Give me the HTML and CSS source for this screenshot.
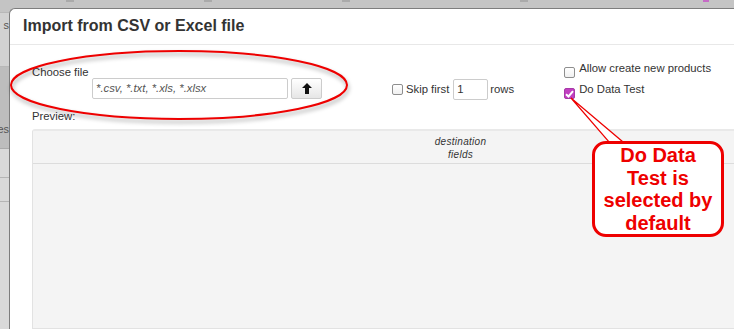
FILE: index.html
```html
<!DOCTYPE html>
<html>
<head>
<meta charset="utf-8">
<link rel="stylesheet" href="styles.css">
</head>
<body>
<div class="page">
  <div class="topstrip">
    <span class="mark m1"></span><span class="mark m2"></span><span class="mark m3"></span><span class="mark m4"></span><span class="mark purple"></span>
  </div>
  <div class="main">
    <div class="side">
      <div class="side-a"><span class="side-txt">s</span></div>
      <div class="side-b"><span class="side-txt">es</span></div>
      <div class="side-c"></div>
    </div>
    <div class="modal">
      <div class="modal-header">
        <h1 class="title">Import from CSV or Excel file</h1>
      </div>
      <div class="modal-body">
        <div class="controls">
          <div class="choose">
            <div class="label">Choose file</div>
            <div class="file-row">
              <div class="file-input">*.csv, *.txt, *.xls, *.xlsx</div>
              <div class="btn">
                <svg width="10" height="11" viewBox="0 0 10 11"><path d="M5 0 L10 5 L7 5 L7 11 L3 11 L3 5 L0 5 Z" fill="#111"/></svg>
              </div>
            </div>
          </div>
          <div class="skip">
            <span class="cb"></span>
            <span class="txt">Skip first</span>
            <div class="num-input">1</div>
            <span class="txt">rows</span>
          </div>
          <div class="opts">
            <div class="opt"><span class="cb"></span><span class="txt">Allow create new products</span></div>
            <div class="opt"><span class="cb checked"><svg width="9" height="8" viewBox="0 0 9 8"><path d="M1 4.2 L3.5 6.5 L8 1.2" fill="none" stroke="#fff" stroke-width="2"/></svg></span><span class="txt">Do Data Test</span></div>
          </div>
        </div>
        <div class="preview-label">Preview:</div>
        <div class="table">
          <div class="thead">
            <div class="th">destination<br>fields</div>
          </div>
          <div class="tbody"></div>
        </div>
      </div>
    </div>
  </div>

  <svg class="ellipse" width="360" height="90" viewBox="0 0 360 90">
    <ellipse cx="179" cy="36" rx="168" ry="34" fill="none" stroke="#ee0000" stroke-width="2"/>
  </svg>

  <svg class="pointer" width="70" height="50" viewBox="0 0 70 50">
    <polygon points="10,2 48,46 62,46" fill="#fff" stroke="#ee0000" stroke-width="1.2"/>
  </svg>
  <div class="callout">Do Data<br>Test is<br>selected by<br>default</div>
</div>
</body>
</html>
```
FILE: styles.css
```css
* { box-sizing: border-box; }
html, body { margin: 0; padding: 0; }
body {
  width: 734px;
  height: 329px;
  overflow: hidden;
  background: #c4c4c4;
  font-family: "Liberation Sans", Arial, sans-serif;
  font-size: 11.3px;
  color: #333;
}
.page { position: relative; width: 734px; height: 329px; overflow: hidden; }

.topstrip {
  height: 8px;
  background: #c4c4c4;
  display: flex;
  position: relative;
}
.mark { display: block; height: 2px; width: 8px; background: #aaa; margin-top: 0; }
.m1 { margin-left: 66px; }
.m2 { margin-left: 130px; }
.m3 { margin-left: 130px; }
.m4 { margin-left: 170px; }
.purple { background: #c66bc6; width: 6px; margin-left: 175px; }

.main { display: flex; height: 321px; }
.side { width: 9px; display: flex; flex-direction: column; }
.side-a {
  height: 55px;
  background: #d2d2d2;
  border-top: 1px solid #b8b8b8;
  border-bottom: 1px solid #b8b8b8;
  margin-top: 4px;
  position: relative;
  overflow: hidden;
}
.side-b {
  height: 82px;
  background: #bdbdbd;
  border-bottom: 1px solid #aaa;
  position: relative;
  overflow: hidden;
}
.side-c {
  flex: 1;
  background: #d9d9d9;
  background-image:
    linear-gradient(#b5b5b5, #b5b5b5),
    linear-gradient(#b5b5b5, #b5b5b5);
  background-size: 100% 1px, 100% 1px;
  background-position: 0 28px, 0 52px;
  background-repeat: no-repeat;
}
.side-txt { position: absolute; right: 0; top: 6px; font-size: 11px; color: #555; }
.side-b .side-txt { top: 56px; }

.modal {
  flex: 1;
  background: #fff;
  border: 1px solid #7d7d7d;
  border-right: none;
  border-bottom: none;
  border-top-left-radius: 6px;
  overflow: hidden;
}
.modal-header {
  height: 36px;
  border-bottom: 1px solid #e8e8e8;
  padding-left: 13px;
}
.title {
  margin: 0;
  font-size: 16px;
  font-weight: bold;
  line-height: 34px;
  color: #333;
}
.modal-body { padding-left: 22px; }

.controls { display: flex; height: 64px; }
.choose { width: 290px; padding-top: 21px; }
.label { line-height: 13px; height: 12px; }
.file-row { display: flex; margin-left: 60px; }
.file-input {
  width: 197px;
  height: 21px;
  border: 1px solid #ccc;
  border-radius: 2px;
  font-style: italic;
  color: #555;
  line-height: 19px;
  padding-left: 3px;
}
.btn {
  width: 31px;
  height: 21px;
  margin-left: 3px;
  border: 1px solid #ccc;
  border-radius: 2px;
  background: linear-gradient(#fff, #e6e6e6);
  display: flex;
  align-items: center;
  justify-content: center;
}

.skip {
  display: flex;
  align-items: center;
  margin-left: 70px;
  margin-top: 34px;
  height: 21px;
}
.skip .txt { margin-left: 3px; line-height: 13px; }
.num-input {
  width: 35px;
  height: 21px;
  border: 1px solid #ccc;
  border-radius: 2px;
  margin-left: 4px;
  padding-left: 3px;
  line-height: 19px;
  color: #333;
}
.skip .num-input + .txt { margin-left: 2px; }

.opts { margin-left: 50px; padding-top: 19px; }
.opt { display: flex; align-items: flex-start; height: 21px; }
.opt .txt { margin-left: 4px; line-height: 13px; margin-top: -2px; }

.cb {
  display: inline-flex;
  align-items: center;
  justify-content: center;
  width: 11px;
  height: 11px;
  border: 1px solid #8e8e8e;
  border-radius: 2px;
  background: linear-gradient(#fff, #f0f0f0);
  flex: none;
}
.opt .cb { margin-top: 3px; }
.cb.checked {
  background: #c13fc1;
  border-color: #a83aa8;
}

.preview-label { line-height: 13px; margin-top: 1px; height: 19px; }

.table {
  width: 900px;
  height: 200px;
  background: #f4f4f4;
  border: 1px solid #e2e2e2;
  border-top-width: 2px;
  border-top-color: #e9e9e9;
  border-top-left-radius: 3px;
}
.thead {
  height: 33px;
  border-bottom: 1px solid #dcdcdc;
}
.th {
  width: 855px;
  text-align: center;
  font-style: italic;
  font-size: 10px;
  line-height: 13px;
  padding-top: 4px;
  color: #333;
  letter-spacing: 0.3px;
}
.tbody { height: 160px; }

.ellipse {
  position: absolute;
  left: 0;
  top: 49px;
  filter: drop-shadow(1px 3px 2px rgba(0,0,0,0.35));
}
.pointer {
  position: absolute;
  left: 561px;
  top: 96px;
}
.callout {
  position: absolute;
  left: 592px;
  top: 141px;
  width: 132px;
  height: 96px;
  background: #fff;
  border: 3px solid #ee0000;
  border-radius: 14px;
  color: #ee0000;
  font-weight: bold;
  font-size: 20px;
  line-height: 22.5px;
  text-align: center;
  padding-top: 0;
}
```
